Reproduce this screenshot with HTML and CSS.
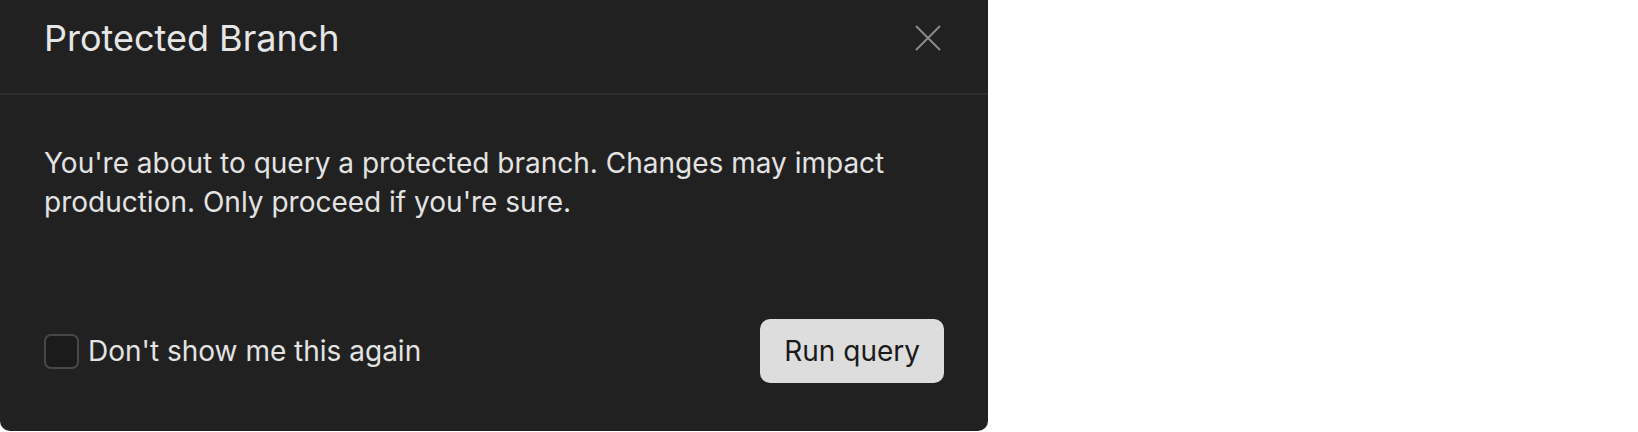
FILE: index.html
```html
<!DOCTYPE html>
<html lang="en">
<head>
<meta charset="utf-8">
<title>Protected Branch</title>
<link rel="stylesheet" href="styles.css">
</head>
<body>
<div class="dialog">
  <div class="header">
    <h2 class="title">Protected Branch</h2>
    <button class="close" aria-label="Close">
      <svg width="26" height="26" viewBox="0 0 26 26"><path d="M1 1 L25 25 M25 1 L1 25" stroke="#8a8a8a" stroke-width="2" fill="none"/></svg>
    </button>
  </div>
  <div class="body">
    <p class="message">You're about to query a protected branch. Changes may impact production. Only proceed if you're sure.</p>
  </div>
  <div class="footer">
    <label class="check">
      <span class="box"></span>
      <span class="label">Don't show me this again</span>
    </label>
    <button class="run">Run query</button>
  </div>
</div>
</body>
</html>
```

FILE: styles.css
```css
html, body {
  margin: 0;
  padding: 0;
  background: #ffffff;
}
body {
  font-family: Inter, "Noto Sans", sans-serif;
}
.dialog {
  width: 988px;
  height: 431px;
  background: #212121;
  border-radius: 0 0 10px 10px;
  display: flex;
  flex-direction: column;
  box-sizing: border-box;
}
.header {
  height: 95px;
  box-sizing: border-box;
  padding: 16px 47px 0 44px;
  display: flex;
  align-items: flex-start;
  justify-content: space-between;
  border-bottom: 2px solid #2c2c2c;
}
.title {
  margin: 0;
  font-size: 36px;
  line-height: 44px;
  font-weight: 400;
  color: #e6e6e6;
}
.close {
  margin-top: 9px;
  padding: 0;
  border: 0;
  background: transparent;
  width: 26px;
  height: 26px;
  display: flex;
}
.body {
  padding: 49px 44px 0 44px;
}
.message {
  margin: 0;
  font-size: 28px;
  line-height: 39px;
  color: #e3e3e3;
}
.footer {
  margin-top: auto;
  padding: 0 44px 48px 44px;
  display: flex;
  align-items: center;
  justify-content: space-between;
}
.check {
  display: flex;
  align-items: center;
  gap: 9px;
}
.box {
  width: 35px;
  height: 35px;
  box-sizing: border-box;
  border: 2px solid #474747;
  border-radius: 7px;
  background: #1b1b1b;
}
.label {
  font-size: 28px;
  color: #e3e3e3;
}
.run {
  height: 64px;
  padding: 0 24px;
  border: 0;
  border-radius: 10px;
  background: #dddddd;
  color: #1a1a1a;
  font-family: Inter, "Noto Sans", sans-serif;
  font-size: 28px;
}
```
